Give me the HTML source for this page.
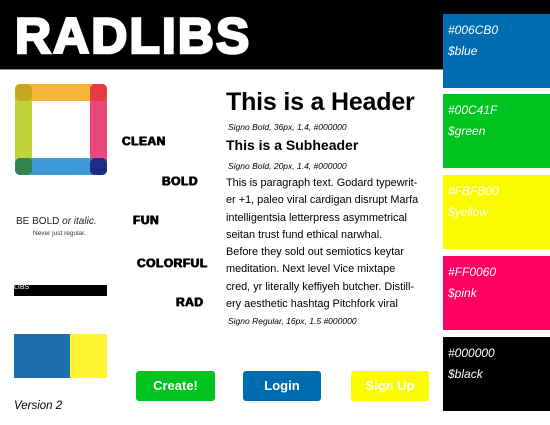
<!DOCTYPE html>
<html><head><style>
*{margin:0;padding:0;box-sizing:border-box}
body{width:550px;height:425px;background:#fff;position:relative;overflow:hidden;font-family:"Liberation Sans",sans-serif}
.a{position:absolute}
.hdr{left:0;top:0;width:550px;height:70px;background:#000;border-bottom:1px solid #888}
.logo{left:15px;top:6px;font-size:50px;font-weight:bold;color:#fff;-webkit-text-stroke:2.5px #fff;letter-spacing:2px;line-height:60px}
.sw{left:443px;width:107px;height:74px;color:#fff;font-style:italic;font-size:12px;padding:6px 5px;line-height:21px}
.w{font-weight:bold;font-size:12px;letter-spacing:.5px;text-shadow:.5px 0 0 #000,-.5px 0 0 #000,0 .5px 0 #000}
.btn{top:371px;height:30px;border-radius:3px;color:#fff;font-weight:bold;font-size:13px;text-align:center;line-height:30px}
.cap{font-style:italic;font-size:8.5px}
</style></head><body>
<div class="a hdr"></div>
<div class="a logo">RADLIBS</div>
<div class="a sw" style="top:14px;background:#006CB0">#006CB0<br>$blue</div>
<div class="a sw" style="top:94px;background:#00C41F">#00C41F<br>$green</div>
<div class="a sw" style="top:175px;background:#FBFB00">#FBFB00<br>$yellow</div>
<div class="a sw" style="top:256px;background:#FF0060">#FF0060<br>$pink</div>
<div class="a sw" style="top:337px;background:#000">#000000<br>$black</div>

<svg class="a" style="left:15px;top:84px" width="92" height="91">
<rect x="0" y="0" width="92" height="17" rx="5" fill="#f9b233" opacity=".95"/>
<rect x="0" y="0" width="17" height="91" rx="5" fill="#b5cc18" opacity=".85"/>
<rect x="75" y="0" width="17" height="91" rx="5" fill="#e8336b" opacity=".9"/>
<rect x="0" y="74" width="92" height="17" rx="5" fill="#2a8fd4" opacity=".9"/>
<rect x="0" y="74" width="17" height="17" rx="5" fill="#2e7d32" opacity=".8"/>
<rect x="75" y="74" width="17" height="17" rx="5" fill="#1a237e" opacity=".9"/>
<rect x="75" y="0" width="17" height="17" rx="5" fill="#e53935" opacity=".8"/>
<rect x="0" y="0" width="17" height="17" rx="5" fill="#c8a020" opacity=".8"/>
</svg>

<div class="a w" style="left:122px;top:134px">CLEAN</div>
<div class="a w" style="left:162px;top:174px">BOLD</div>
<div class="a w" style="left:133px;top:213px">FUN</div>
<div class="a w" style="left:137px;top:256px">COLORFUL</div>
<div class="a w" style="left:176px;top:295px">RAD</div>

<div class="a" style="left:16px;top:216px;font-size:10px;color:#222">BE BOLD <i>or italic.</i></div>
<div class="a" style="left:33px;top:230px;font-size:6.5px;color:#333">Never just regular.</div>

<div class="a" style="left:14px;top:285px;width:93px;height:11px;background:#000;color:#fff;font-size:7px;line-height:6px;overflow:hidden">LIBS</div>

<div class="a" style="left:14px;top:334px;width:56px;height:44px;background:#1f6fad"></div>
<div class="a" style="left:70px;top:334px;width:37px;height:44px;background:#fff533"></div>
<div class="a" style="left:14px;top:400px;font-style:italic;font-size:11.5px">Version 2</div>

<div class="a" style="left:226px;top:88px;font-size:25px;font-weight:bold;letter-spacing:-.2px">This is a Header</div>
<div class="a cap" style="left:228px;top:122px">Signo Bold, 36px, 1.4, #000000</div>
<div class="a" style="left:226px;top:137px;font-size:14px;font-weight:bold">This is a Subheader</div>
<div class="a cap" style="left:228px;top:161px">Signo Bold, 20px, 1.4, #000000</div>
<div class="a" style="left:226px;top:175px;width:222px;font-size:10.9px;line-height:17.3px">This is paragraph text. Godard typewrit-<br>er +1, paleo viral cardigan disrupt Marfa<br>intelligentsia letterpress asymmetrical<br>seitan trust fund ethical narwhal.<br>Before they sold out semiotics keytar<br>meditation. Next level Vice mixtape<br>cred, yr literally keffiyeh butcher. Distill-<br>ery aesthetic hashtag Pitchfork viral</div>
<div class="a cap" style="left:228px;top:316px">Signo Regular, 16px, 1.5 #000000</div>

<div class="a btn" style="left:136px;width:79px;background:#00C41F">Create!</div>
<div class="a btn" style="left:243px;width:78px;background:#006CB0">Login</div>
<div class="a btn" style="left:351px;width:78px;background:#FBFB00">Sign Up</div>
</body></html>
